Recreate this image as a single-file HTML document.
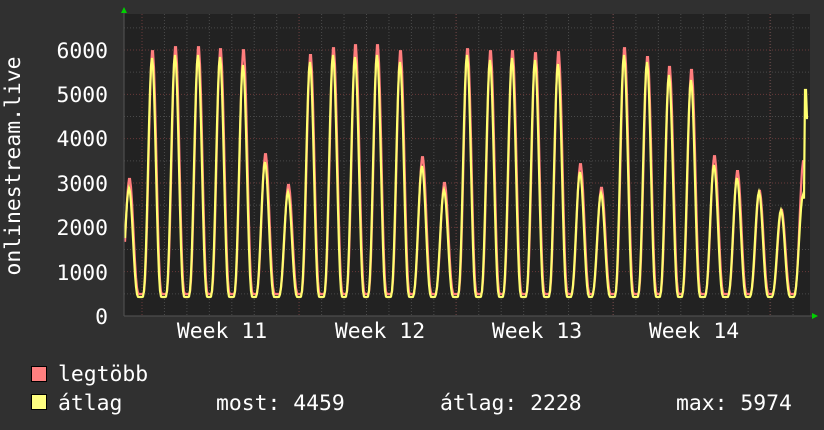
<!DOCTYPE html>
<html><head><meta charset="utf-8"><style>
body{margin:0;background:#303030;width:824px;height:430px;overflow:hidden;font-family:"DejaVu Sans Mono","Liberation Mono",monospace;color:#fff}
svg{position:absolute;left:0;top:0}
</style></head><body>
<svg width="824" height="430" id="s" xmlns="http://www.w3.org/2000/svg">
<rect x="0" y="0" width="824" height="430" fill="#303030"/>
<rect x="124" y="14" width="686" height="302" fill="#222222"/>
<g id="grid"></g>
<path id="mx" fill="none" stroke="#ff7d7d" stroke-width="2.2"/>
<path id="av" fill="none" stroke="#ffff70" stroke-width="2.2"/>
<line x1="124" y1="316" x2="814" y2="316" stroke="#555" stroke-width="1"/>
<line x1="124" y1="316" x2="124" y2="12" stroke="#555" stroke-width="1"/>
<polygon points="121,13 127,13 124,7" fill="#00d000"/>
<polygon points="812,313 812,319 818,316" fill="#00d000"/>
<g font-family="DejaVu Sans Mono, Liberation Mono, monospace" font-size="21.4" fill="#fff">
<text x="108" y="58" text-anchor="end">6000</text>
<text x="108" y="102" text-anchor="end">5000</text>
<text x="108" y="146" text-anchor="end">4000</text>
<text x="108" y="191" text-anchor="end">3000</text>
<text x="108" y="235" text-anchor="end">2000</text>
<text x="108" y="280" text-anchor="end">1000</text>
<text x="108" y="324" text-anchor="end">0</text>
<text x="222" y="338" text-anchor="middle">Week 11</text>
<text x="380" y="338" text-anchor="middle">Week 12</text>
<text x="537" y="338" text-anchor="middle">Week 13</text>
<text x="694" y="338" text-anchor="middle">Week 14</text>
<text transform="translate(20,166) rotate(-90)" text-anchor="middle">onlinestream.live</text>
<text x="58" y="381">legtöbb</text>
<text x="58" y="410">átlag</text>
<text x="216" y="410">most: 4459</text>
<text x="440" y="410">átlag: 2228</text>
<text x="676" y="410">max: 5974</text>
</g>
<rect x="31.5" y="366.5" width="15" height="15" fill="#ff8080" stroke="#000"/>
<rect x="31.5" y="394.5" width="15" height="15" fill="#ffff80" stroke="#000"/>
</svg>
<script>
var g=document.getElementById('grid'),h='';
function Y(v){return 316-v*0.04433;}
for(var v=500;v<=6500;v+=500){var y=Y(v);h+='<line x1="124" x2="810" y1="'+y+'" y2="'+y+'" stroke="'+(v%1000?'#4a4a4a':'#6a3a3a')+'" stroke-dasharray="1,2"/>';}
for(var x=142;x<810;x+=22.45){h+='<line y1="14" y2="316" x1="'+x+'" x2="'+x+'" stroke="#4a4a4a" stroke-dasharray="1,2"/>';}
[142,299,456,613,770].forEach(function(x){h+='<line y1="14" y2="316" x1="'+x+'" x2="'+x+'" stroke="#6a3a3a" stroke-dasharray="1,2"/>';});
g.innerHTML=h;
var pk=[[129,178,188],[152,49,58],[175,45,55],[198,45,55],[220,47,57],[243,48,65],[265,153,162],[288,184,192],[310,53,62],[333,46,55],[355,43,57],[377,43,55],[400,49,62],[422,156,166],[444,182,190],[467,47,55],[490,49,60],[512,49,58],[535,51,60],[558,50,64],[580,163,172],[601,187,193],[624,46,55],[647,55,62],[669,65,75],[691,68,80],[714,155,165],[737,170,178],[759,190,192],[781,209,210],[803,160,195]];
function build(idx,base,off){var d='';for(var x=125;x<=808;x++){var best=null,bd=1e9;pk.forEach(function(p){var dd=Math.abs(x-(p[0]+off));if(dd<bd){bd=dd;best=p;}});
var top=best[idx];var amp=base-top;var f=bd<9.5?Math.pow(0.5+0.5*Math.cos(Math.PI*bd/9.5),1.3):0;var y=base-amp*f;
if(x>=805&&idx==1){continue;}
if(x>=805&&idx==2){y=(x<807)?90:118;}
d+=(d?'L':'M')+x+','+y.toFixed(1);}return d;}
document.getElementById('mx').setAttribute('d',build(1,294,0.5));
document.getElementById('av').setAttribute('d',build(2,297,0));
</script>
</body></html>
